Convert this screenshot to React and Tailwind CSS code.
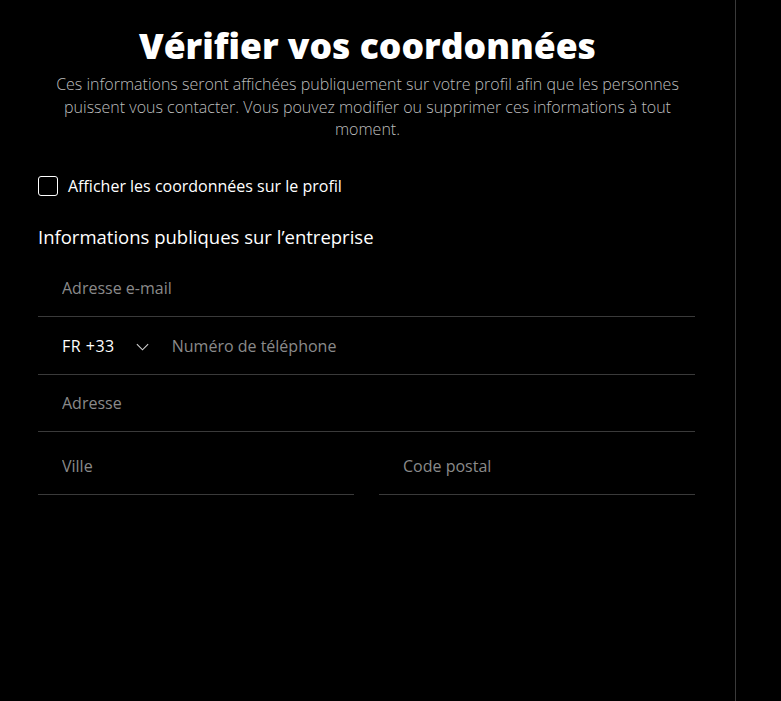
const Field = ({ placeholder, className = "" }) => (
  <div className={"flex items-center h-[57px] border-b border-[#3a3a3a] pl-6 " + className}>
    <input
      type="text"
      placeholder={placeholder}
      className="w-full bg-transparent outline-none text-[16px] text-white placeholder:text-[#8a8a8a]"
    />
  </div>
);

export default function App() {
  return (
    <div className="w-[781px] h-[701px] bg-black flex font-['Open_Sans',sans-serif] overflow-hidden">
      <div className="w-[736px] h-full border-r border-[#3a3a3a] shrink-0">
        <div className="pt-[23px] flex flex-col items-center">
          <h1 className="text-[35.5px] leading-[44px] font-extrabold text-white">
            Vérifier vos coordonnées
          </h1>
          <p className="mt-[6px] w-[640px] text-center text-[16px] leading-[22.5px] font-light text-[#bdbdbd]">
            Ces informations seront affichées publiquement sur votre profil afin que les personnes puissent vous contacter. Vous pouvez modifier ou supprimer ces informations à tout moment.
          </p>
        </div>

        <div className="pl-[38px]">
          <label className="mt-[33px] flex items-center gap-[10px] text-white text-[16px]">
            <span className="w-[20px] h-[20px] rounded-[3px] border border-white shrink-0" />
            Afficher les coordonnées sur le profil
          </label>

          <h2 className="mt-[26px] text-[18.5px] leading-[26px] text-white">
            Informations publiques sur l’entreprise
          </h2>

          <div className="w-[657px] mt-[10px]">
            <Field placeholder="Adresse e-mail" />
            <div className="flex items-center h-[58px] border-b border-[#3a3a3a] pl-6 pt-[2px]">
              <button className="flex items-center gap-[20px] text-white text-[16px] shrink-0">
                <span className="tracking-[0.5px]">FR +33</span>
                <svg width="15" height="15" viewBox="0 0 16 16" fill="none" stroke="#cfcfcf" strokeWidth="1.2">
                  <path d="M2 5.5 8 11.5l6-6" />
                </svg>
              </button>
              <input
                type="text"
                placeholder="Numéro de téléphone"
                className="ml-[22px] w-full bg-transparent outline-none text-[16px] text-white placeholder:text-[#8a8a8a]"
              />
            </div>
            <Field placeholder="Adresse" className="pt-[1px]" />
            <div className="grid grid-cols-2 gap-[25px]">
              <Field placeholder="Ville" className="h-[63px] pt-[6px]" />
              <Field placeholder="Code postal" className="h-[63px] pt-[6px]" />
            </div>
          </div>
        </div>
      </div>
      <div className="flex-1" />
    </div>
  );
}
